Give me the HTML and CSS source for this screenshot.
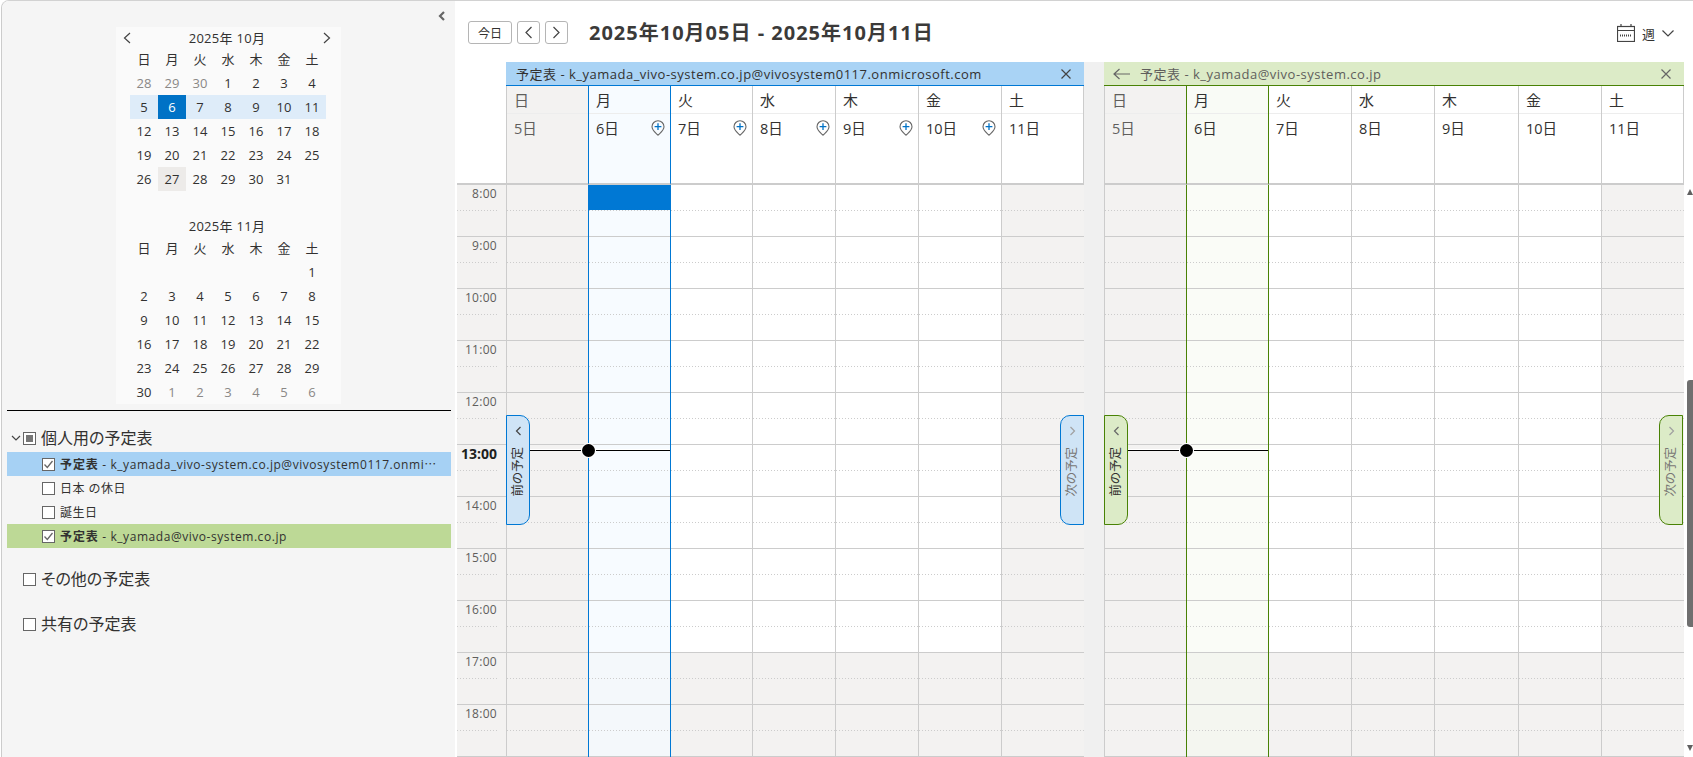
FILE: index.html
```html
<!DOCTYPE html>
<html lang="ja">
  <head>
  <meta charset="utf-8">
  <title>予定表</title>
  <link rel="stylesheet" href="styles.css">
  </head>
  <body>
  <div class="app">

    <div class="sidebar">
      <div class="collapse">
        <svg width="8" height="10" viewBox="0 0 8 10"><path d="M6 1 L2 5 L6 9" class="stroke-bold"/></svg>
      </div>

      <div class="minical">
        <div class="minical-title">
          <svg width="8" height="12" viewBox="0 0 8 12"><path d="M7 1 L1.500 6 L7 11" class="stroke-thin"/></svg>
          <span>2025年 10月</span>
          <svg width="8" height="12" viewBox="0 0 8 12"><path d="M1 1 L6.500 6 L1 11" class="stroke-thin"/></svg>
        </div>
        <div id="october" class="minical-grid"></div>
        <div class="minical-title second">
          <span>2025年 11月</span>
        </div>
        <div id="november" class="minical-grid"></div>
      </div>

      <div class="divider"></div>

      <div class="section-head">
        <svg class="caret" width="10" height="6" viewBox="0 0 10 6"><path d="M1 1 L5 5 L9 1" class="stroke-thin"/></svg>
        <span class="check mixed"></span>
        <span>個人用の予定表</span>
      </div>
      <div class="cal-row blue">
        <span class="check"><svg width="11" height="11" viewBox="0 0 11 11"><path d="M1.500 5.500 L4.300 8.500 L9.500 2" class="stroke-check"/></svg></span>
        <span class="cal-name"><b>予定表</b> - k_yamada_vivo-system.co.jp@vivosystem0117.onmi<span class="dots">⋯</span></span>
      </div>
      <div class="cal-row">
        <span class="check"></span>
        <span class="cal-name">日本 の休日</span>
      </div>
      <div class="cal-row">
        <span class="check"></span>
        <span class="cal-name">誕生日</span>
      </div>
      <div class="cal-row green">
        <span class="check"><svg width="11" height="11" viewBox="0 0 11 11"><path d="M1.500 5.500 L4.300 8.500 L9.500 2" class="stroke-check"/></svg></span>
        <span class="cal-name"><b>予定表</b> - k_yamada@vivo-system.co.jp</span>
      </div>

      <div class="section-head spaced">
        <span class="check"></span>
        <span>その他の予定表</span>
      </div>
      <div class="section-head spaced">
        <span class="check"></span>
        <span>共有の予定表</span>
      </div>
    </div>

    <div class="main">
      <div class="toolbar">
        <button class="btn today-btn">今日</button>
        <button class="btn arrow-btn"><svg width="9" height="13" viewBox="0 0 9 13"><path d="M7.500 1 L2 6.500 L7.500 12" class="stroke-thin"/></svg></button>
        <button class="btn arrow-btn"><svg width="9" height="13" viewBox="0 0 9 13"><path d="M1.500 1 L7 6.500 L1.500 12" class="stroke-thin"/></svg></button>
        <h1 class="range">2025年10月05日 - 2025年10月11日</h1>
        <div class="view-pick">
          <svg width="18" height="18" viewBox="0 0 18 18">
            <rect x="0.500" y="2.500" width="17" height="15" class="stroke-thin"/>
            <path d="M0.500 6.500 H17.500 M4 0 V3 M14 0 V3" class="stroke-thin"/>
            <path d="M3 11.500 H15" class="stroke-dots"/>
          </svg>
          <span class="view-name">週</span>
          <svg width="12" height="7" viewBox="0 0 12 7"><path d="M0.500 0.500 L6 6 L11.500 0.500" class="stroke-thin"/></svg>
        </div>
      </div>

      <div class="calendar">
        <div class="gutter">
          <div class="gutter-head"></div>
          <div id="times"></div>
        </div>

        <div class="pane pane-blue">
          <div class="pane-title">
            <span>予定表 - k_yamada_vivo-system.co.jp@vivosystem0117.onmicrosoft.com</span>
            <svg width="10" height="10" viewBox="0 0 10 10"><path d="M0.500 0.500 L9.500 9.500 M9.500 0.500 L0.500 9.500" class="stroke-thin"/></svg>
          </div>
          <div id="headA" class="days"></div>
          <div id="bodyA" class="days hours">
            <div class="tab tab-prev"><svg width="7" height="10" viewBox="0 0 7 10"><path d="M5.500 1 L1.500 5 L5.500 9" class="stroke-thin"/></svg><span class="tab-text">前の予定</span></div>
            <div class="tab tab-next"><svg width="7" height="10" viewBox="0 0 7 10"><path d="M1.500 1 L5.500 5 L1.500 9" class="stroke-thin"/></svg><span class="tab-text">次の予定</span></div>
            <div class="now-line"><span class="now-dot"></span></div>
          </div>
        </div>

        <div class="pane-gap"></div>

        <div class="pane pane-green">
          <div class="pane-title">
            <svg class="back" width="18" height="12" viewBox="0 0 18 12"><path d="M6.500 1 L1 6 L6.500 11 M1 6 H17" class="stroke-thin"/></svg>
            <span>予定表 - k_yamada@vivo-system.co.jp</span>
            <svg width="10" height="10" viewBox="0 0 10 10"><path d="M0.500 0.500 L9.500 9.500 M9.500 0.500 L0.500 9.500" class="stroke-thin"/></svg>
          </div>
          <div id="headB" class="days"></div>
          <div id="bodyB" class="days hours">
            <div class="tab tab-prev"><svg width="7" height="10" viewBox="0 0 7 10"><path d="M5.500 1 L1.500 5 L5.500 9" class="stroke-thin"/></svg><span class="tab-text">前の予定</span></div>
            <div class="tab tab-next"><svg width="7" height="10" viewBox="0 0 7 10"><path d="M1.500 1 L5.500 5 L1.500 9" class="stroke-thin"/></svg><span class="tab-text">次の予定</span></div>
            <div class="now-line"><span class="now-dot"></span></div>
          </div>
        </div>

        <div class="scrollbar">
          <span class="sb-up"></span>
          <span class="sb-thumb"></span>
          <span class="sb-down"></span>
        </div>
      </div>
    </div>

  </div>
  <script src="app.js"></script>
  </body>
</html>
```

FILE: styles.css
```css
* {
  box-sizing: border-box;
}
html, body {
  margin: 0;
  height: 100%;
  overflow: hidden;
  background: #fff;
}
body {
  font-family: "Open Sans", "Noto Sans CJK JP", sans-serif;
  font-size: 13px;
  font-feature-settings: "palt";
  color: #323130;
}
svg {
  display: block;
  flex: none;
}
.stroke-thin {
  fill: none;
  stroke: #444;
  stroke-width: 1.2;
}
.stroke-bold {
  fill: none;
  stroke: #666;
  stroke-width: 2.200;
}
.stroke-check {
  fill: none;
  stroke: #666;
  stroke-width: 1.300;
}
.stroke-dots {
  fill: none;
  stroke: #444;
  stroke-width: 2;
  stroke-dasharray: 1 1;
}

.app {
  display: flex;
  height: 757px;
  margin-left: 1px;
  border-top: 1px solid #d2d2d2;
  border-left: 1px solid #ccc;
  border-top-left-radius: 8px;
  overflow: hidden;
}

/* left column */
.sidebar {
  width: 453px;
  flex: none;
  background: #f5f5f5;
  padding: 10px 4px 0 5px;
}
.collapse {
  display: flex;
  justify-content: flex-end;
  height: 16px;
  padding-right: 5px;
}
.minical {
  width: 225px;
  margin-left: 109px;
  background: #fafafa;
}
.minical-title {
  display: flex;
  justify-content: space-between;
  align-items: center;
  height: 20px;
  padding: 2px 10px 0 7px;
  line-height: 20px;
  letter-spacing: 0.3px;
}
.minical-title.second {
  justify-content: center;
  height: 21px;
  padding-top: 0;
  margin-top: 24px;
}
.minical-grid {
  display: grid;
  grid-template-columns: repeat(7, 28px);
  grid-auto-rows: 24px;
  padding-left: 14px;
}
.mc {
  text-align: center;
  line-height: 24px;
}
.mc.dim {
  color: #8a8886;
}
.mc.week {
  background: #deecf9;
}
.mc.now {
  background: #0072c6;
  color: #fff;
}
.mc.mark {
  background: #edebe9;
}
.divider {
  height: 1px;
  margin-top: 6px;
  background: #000;
}
.section-head {
  display: flex;
  align-items: center;
  height: 28px;
  margin-top: 13px;
  padding-left: 16px;
  font-size: 16px;
  line-height: 26px;
}
.section-head .check {
  margin-right: 5px;
}
.section-head.spaced {
  margin-top: 17px;
}
.caret {
  margin: 0 2px 0 -12px;
}
.check {
  display: flex;
  align-items: center;
  justify-content: center;
  flex: none;
  width: 13px;
  height: 13px;
  border: 1px solid #666;
  background: #fff;
}
.check.mixed::before {
  content: "";
  width: 7px;
  height: 7px;
  background: #767676;
}
.cal-row {
  display: flex;
  align-items: center;
  height: 24px;
  padding-left: 35px;
  font-size: 12px;
  letter-spacing: 0.55px;
}
.cal-row .check {
  margin-right: 5px;
}
.cal-row.blue {
  background: #a6d1f4;
}
.cal-row.green {
  background: #bdd996;
}
.cal-name {
  white-space: nowrap;
}
.cal-name b {
  font-weight: 700;
  letter-spacing: 0.9px;
}
.dots {
  font-family: "Noto Sans CJK JP", sans-serif;
}

/* right column */
.main {
  flex: 1;
  min-width: 0;
}
.toolbar {
  display: flex;
  align-items: flex-start;
  height: 61px;
  padding: 20px 19px 0 13px;
}
.btn {
  display: flex;
  align-items: center;
  justify-content: center;
  height: 23px;
  padding: 0;
  margin-right: 5px;
  border: 1px solid #b5b5b5;
  border-radius: 3px;
  background: #fff;
  font: inherit;
  font-size: 12px;
  color: #323130;
}
.today-btn {
  width: 44px;
}
.arrow-btn {
  width: 23px;
}
.range {
  margin: 0 0 0 16px;
  font-size: 20px;
  font-weight: 700;
  line-height: 24px;
  letter-spacing: 1px;
  color: #3b3a39;
}
.view-pick {
  display: flex;
  align-items: center;
  margin: 2px 0 0 auto;
  height: 20px;
}
.view-name {
  margin: 0 7px;
  font-size: 13px;
}

.calendar {
  display: flex;
  height: 695px;
  padding-left: 2px;
}
.gutter {
  width: 49px;
  flex: none;
}
.gutter-head {
  height: 123px;
  border-bottom: 2px solid #ccc;
}
.time {
  height: 52px;
  padding-right: 9px;
  background: #f3f2f1;
  border-bottom: 1px solid #ccc;
  text-align: right;
  font-size: 12px;
  line-height: 18px;
  letter-spacing: 0.3px;
  color: #605e5c;
}
.half {
  height: 26px;
  background: repeating-linear-gradient(90deg, #ccc 0 1px, transparent 1px 3px) left bottom / 100% 1px no-repeat;
}
.time.current {
  font-size: 14px;
  font-weight: 700;
  letter-spacing: 0;
  color: #201f1e;
}
.pane {
  flex: none;
}
.pane-blue {
  width: 578px;
  --line: #0078d4;
  --title: #a9d3f5;
  --head-now: #f7fbff;
  --cell-now: #f7fbff;
  --off-now: #f4f8fb;
  --tab: #cfe4f6;
}
.pane-green {
  width: 580px;
  --line: #498205;
  --title: #dcebc7;
  --head-now: #f9fbf6;
  --cell-now: #fafcf7;
  --off-now: #f4f6f0;
  --tab: #dcebc7;
}
.pane-blue .days {
  grid-template-columns: 82px 82px 82px 83px 83px 83px 83px;
}
.pane-green .days {
  grid-template-columns: 82px 82px 83px 83px 84px 83px 83px;
}
.pane-gap {
  width: 20px;
  flex: none;
  background: #f0f0f0;
}
.pane-title {
  display: flex;
  align-items: center;
  height: 24px;
  padding: 0 13px 0 10px;
  background: var(--title);
  border-bottom: 1px solid var(--line);
  white-space: nowrap;
  letter-spacing: 0.5px;
}
.pane-title span {
  flex: 1;
}
.pane-green .pane-title {
  padding-left: 9px;
  color: #605e5c;
}
.pane-green .stroke-thin {
  stroke: #666;
}
.back {
  margin-right: 9px;
}
.days {
  display: grid;
}
.hours {
  position: relative;
}
.day {
  height: 99px;
  border-left: 1px solid #ccc;
  border-bottom: 2px solid #ccc;
  font-size: 14.500px;
}
.day:last-child, .col:last-of-type {
  border-right: 1px solid #ccc;
}
.day-name {
  height: 28px;
  padding-left: 7px;
  border-bottom: 1px solid #ededed;
  font-size: 15px;
  line-height: 28px;
}
.day-date {
  display: flex;
  justify-content: space-between;
  align-items: flex-start;
  padding: 4px 5px 0 7px;
  line-height: 22px;
}
.day-date svg {
  margin-top: 2px;
}
.day.sunday {
  background: #f3f2f1;
  color: #605e5c;
}
.day.today {
  background: var(--head-now);
}
.day.today, .day.today + .day {
  border-left-color: var(--line);
}
.col {
  border-left: 1px solid #ccc;
  position: relative;
}
.col.today, .col.today + .col {
  border-left-color: var(--line);
}
.cell {
  height: 52px;
  border-bottom: 1px solid #ccc;
}
.col.weekend .cell, .cell.off {
  background-color: #f3f2f1;
}
.col.today .cell {
  background-color: var(--cell-now);
}
.col.today .cell.off {
  background-color: var(--off-now);
}
.event {
  position: absolute;
  top: 0;
  left: -1px;
  right: -1px;
  height: 25px;
  background: #0078d4;
}
.tab {
  position: absolute;
  top: 230px;
  z-index: 2;
  display: flex;
  flex-direction: column;
  align-items: center;
  gap: 11px;
  width: 24px;
  height: 110px;
  padding-top: 10px;
  background: var(--tab);
  border: 1px solid var(--line);
}
.tab-prev {
  left: 0;
  border-radius: 0 10px 10px 0;
}
.tab-next {
  right: 0;
  border-radius: 10px 0 0 10px;
  color: #797775;
}
.pane-green .tab-next {
  right: 1px;
}
.tab-next .stroke-thin {
  stroke: #a0a0a0;
}
.tab-text {
  writing-mode: vertical-rl;
  text-orientation: sideways;
  transform: rotate(180deg);
  font-size: 12.500px;
  line-height: 14px;
  white-space: nowrap;
}
.now-line {
  position: absolute;
  top: 265px;
  left: 24px;
  z-index: 1;
  width: 140px;
  height: 1px;
  background: #000;
  box-shadow: 0 -1px 0 #fff;
}
.now-dot {
  position: absolute;
  top: -6px;
  left: 52px;
  width: 13px;
  height: 13px;
  border-radius: 50%;
  background: #000;
  box-shadow: 0 0 0 1px #fff;
}
.scrollbar {
  display: flex;
  flex-direction: column;
  align-items: flex-end;
  width: 9px;
  flex: none;
  margin-top: 122px;
  padding-top: 5px;
}
.sb-up, .sb-down {
  flex: none;
  width: 6px;
  height: 6px;
  border-left: 3px solid transparent;
  border-right: 3px solid transparent;
}
.sb-up {
  border-bottom: 6px solid #606060;
}
.sb-down {
  margin-top: 118px;
  border-top: 6px solid #606060;
}
.sb-thumb {
  flex: none;
  width: 6px;
  height: 247px;
  margin-top: 185px;
  background: #6f6f6f;
  border-radius: 3px 0 0 3px;
}
```

FILE: app.js
```js
/*
  Fills in the two mini calendars, the time column and the two week panes.
*/
var weekdays = ["日", "月", "火", "水", "木", "金", "土"];
var firstHour = 8;
var hourCount = 11;

function addDiv(parent, cls, text) {
  var d = document.createElement("div");
  d.className = cls;
  if (text !== undefined) {
    d.textContent = text;
  }
  parent.appendChild(d);
  return d;
}

function miniMonth(id, cells) {
  var grid = document.getElementById(id);
  for (var i = 0; i < weekdays.length; i++) {
    addDiv(grid, "mc head", weekdays[i]);
  }
  for (var j = 0; j < cells.length; j++) {
    addDiv(grid, "mc " + cells[j][1], cells[j][0]);
  }
}

function range(from, to, cls) {
  var out = [];
  for (var n = from; n <= to; n++) {
    out.push([n, cls]);
  }
  return out;
}

var oct = range(28, 30, "dim").concat(range(1, 4, ""));
oct.push([5, "week"], [6, "now"]);
oct = oct.concat(range(7, 11, "week"), range(12, 26, ""));
oct.push([27, "mark"]);
oct = oct.concat(range(28, 31, ""));
miniMonth("october", oct);

var nov = [["", ""], ["", ""], ["", ""], ["", ""], ["", ""], ["", ""]];
nov = nov.concat(range(1, 30, ""), range(1, 6, "dim"));
miniMonth("november", nov);

var times = document.getElementById("times");
for (var h = 0; h < hourCount; h++) {
  var hour = firstHour + h;
  var t = addDiv(times, hour == 13 ? "time current" : "time");
  addDiv(t, "half", hour + ":00");
}

function pinIcon() {
  var ns = "http://www.w3.org/2000/svg";
  var svg = document.createElementNS(ns, "svg");
  svg.setAttribute("width", "14");
  svg.setAttribute("height", "16");
  svg.setAttribute("viewBox", "0 0 14 16");
  var pin = document.createElementNS(ns, "path");
  pin.setAttribute("d", "M7 15.200 C5 13 1 10.500 1 6.800 C1 3.300 3.700 0.800 7 0.800 C10.300 0.800 13 3.300 13 6.800 C13 10.500 9 13 7 15.200 Z");
  pin.setAttribute("fill", "none");
  pin.setAttribute("stroke", "#666");
  pin.setAttribute("stroke-width", "1.100");
  svg.appendChild(pin);
  var plus = document.createElementNS(ns, "path");
  plus.setAttribute("d", "M7 3.200 V10 M3.600 6.600 H10.400");
  plus.setAttribute("fill", "none");
  plus.setAttribute("stroke", "#0072c6");
  plus.setAttribute("stroke-width", "1.300");
  svg.appendChild(plus);
  return svg;
}

function buildPane(headId, bodyId, pins) {
  var head = document.getElementById(headId);
  var body = document.getElementById(bodyId);
  var first = body.firstChild;
  for (var d = 0; d < 7; d++) {
    var cls = "";
    if (d == 0 || d == 6) cls += " weekend";
    if (d == 0) cls += " sunday";
    if (d == 1) cls += " today";

    var day = addDiv(head, "day" + cls);
    addDiv(day, "day-name", weekdays[d]);
    var date = addDiv(day, "day-date");
    var label = document.createElement("span");
    label.textContent = (d + 5) + "日";
    date.appendChild(label);
    if (pins && d >= 1 && d <= 5) {
      date.appendChild(pinIcon());
    }

    var col = document.createElement("div");
    col.className = "col" + cls;
    for (var h = 0; h < hourCount; h++) {
      var cell = addDiv(col, firstHour + h >= 17 ? "cell off" : "cell");
      addDiv(cell, "half");
    }
    if (pins && d == 1) {
      addDiv(col, "event");
    }
    body.insertBefore(col, first);
  }
}

buildPane("headA", "bodyA", true);
buildPane("headB", "bodyB", false);
```
